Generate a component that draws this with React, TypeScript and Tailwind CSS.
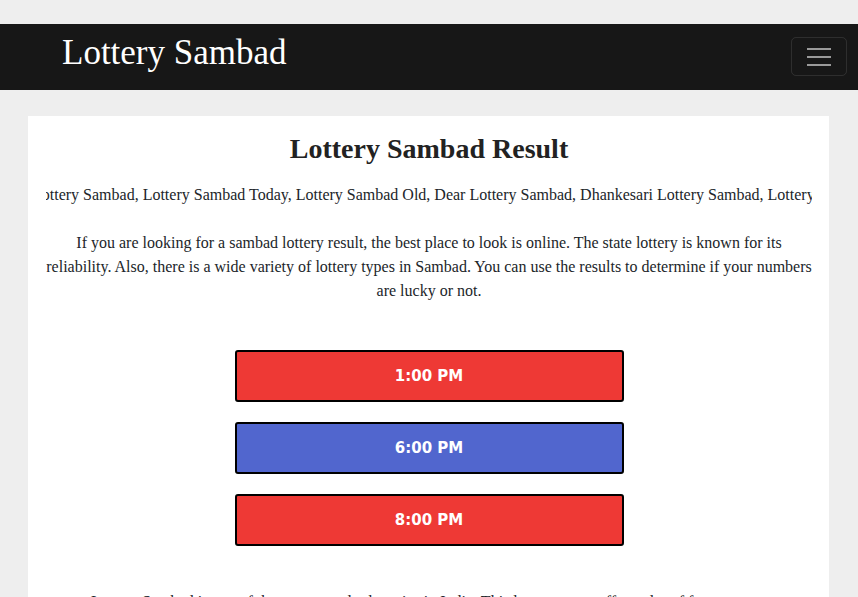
import React from 'react';

const slots = [
  { time: '1:00 PM', color: 'bg-[#ee3935]' },
  { time: '6:00 PM', color: 'bg-[#5166ce]' },
  { time: '8:00 PM', color: 'bg-[#ee3935]' },
];

const tags =
  'Lottery Sambad, Lottery Sambad Today, Lottery Sambad Old, Dear Lottery Sambad, Dhankesari Lottery Sambad, Lottery Sambad Result, Lottery Sambad Live';

const App: React.FC = () => {
  return (
    <div className="min-h-[597px] bg-[#eeeeee] pt-6 font-['Liberation_Serif',serif] text-[#212529]">
      {/* navbar */}
      <nav className="flex h-[66px] items-start justify-between bg-[#171717] pl-[62px] pr-[11px]">
        <a href="#" className="pt-[9px] text-[35px] leading-[40px] text-white">
          Lottery Sambad
        </a>
        <button className="mt-[13px] flex h-[39px] w-[56px] flex-col items-center justify-center gap-[6px] rounded-[5px] border border-white/10">
          <span className="block h-[2px] w-6 bg-[#9a9a9a]"></span>
          <span className="block h-[2px] w-6 bg-[#9a9a9a]"></span>
          <span className="block h-[2px] w-6 bg-[#9a9a9a]"></span>
        </button>
      </nav>

      {/* card */}
      <main className="ml-[28px] mr-[29px] mt-[26px] bg-white pl-[18px] pr-[17px] pt-4 pb-10">
        <h1 className="text-center text-[28px] leading-[34px] font-bold text-[#222]">
          Lottery Sambad Result
        </h1>

        <div className="mt-[17px] overflow-hidden whitespace-nowrap text-base leading-6">
          <div className="-ml-[14px]">{tags}</div>
        </div>

        <p className="mt-6 text-center text-base leading-6">
          If you are looking for a sambad lottery result, the best place to look is online. The state lottery is known for its
          reliability. Also, there is a wide variety of lottery types in Sambad. You can use the results to determine if your numbers
          are lucky or not.
        </p>

        <div className="mt-[47px] flex flex-col items-center gap-5">
          {slots.map((s) => (
            <a
              key={s.time}
              href="#"
              className={`flex h-[52px] w-[389px] items-center justify-center rounded-[3px] border-2 border-black ${s.color} font-['DejaVu_Sans',sans-serif] text-[15px] font-bold text-white`}
            >
              {s.time}
            </a>
          ))}
        </div>

        <p className="mt-11 pl-[45px] text-base leading-6">
          Lottery Sambad is one of the most popular lotteries in India. This lottery game offers a lot of fun.
        </p>
      </main>
    </div>
  );
};

export default App;
